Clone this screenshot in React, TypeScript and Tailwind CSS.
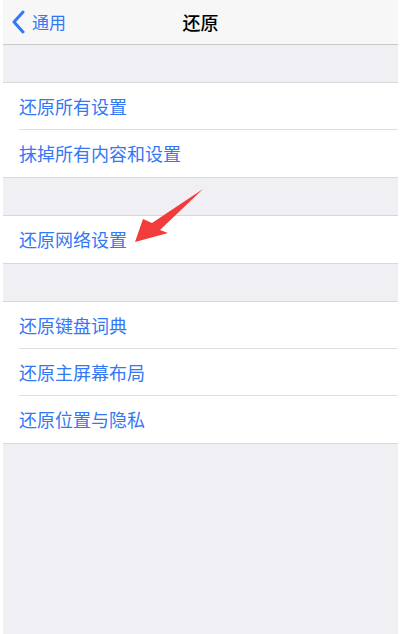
import React from "react";

const font = { fontFamily: '"Noto Sans CJK SC", "Noto Sans", sans-serif' };

function Row({ label, last }: { label: string; last?: boolean }) {
  return (
    <div className="bg-white pl-[16px]">
      <div className={`h-[47px] flex items-center text-[18px] text-[#3478f6] ${last ? "" : "border-b border-[#dedee2]"}`}>
        {label}
      </div>
    </div>
  );
}

function Group({ items }: { items: string[] }) {
  return (
    <div className="mt-[37px] border-y border-[#d8d8dc] bg-white">
      {items.map((t, i) => (
        <Row key={t} label={t} last={i === items.length - 1} />
      ))}
    </div>
  );
}

export default function App() {
  return (
    <div className="w-[400px] h-[634px] bg-white pl-[3px] pr-[2px] overflow-hidden" style={font}>
      <div className="relative h-full bg-[#efeff4] flex flex-col">
        <div className="h-[45px] bg-[#f7f7f7] border-b border-[#c9c9cc] flex items-center relative">
          <div className="flex items-center pl-[9px] text-[#3478f6]">
            <svg width="14" height="24" viewBox="0 0 14 24" className="mr-[6px]">
              <path d="M11 2 L2 12 L11 22" stroke="#3478f6" strokeWidth="3" fill="none" strokeLinecap="round" strokeLinejoin="round" />
            </svg>
            <span className="text-[17px]">通用</span>
          </div>
          <div className="absolute inset-0 flex items-center justify-center text-[18px] text-black font-medium">
            还原
          </div>
        </div>
        <Group items={["还原所有设置", "抹掉所有内容和设置"]} />
        <Group items={["还原网络设置"]} />
        <Group items={["还原键盘词典", "还原主屏幕布局", "还原位置与隐私"]} />
        <svg className="absolute left-[-3px] top-0" width="400" height="634" viewBox="0 0 400 634" style={{ pointerEvents: "none" }}>
          <polygon points="135,242 143,219 152,223 203,189 160,230 168,233" fill="#f23b3b" />
        </svg>
      </div>
    </div>
  );
}
